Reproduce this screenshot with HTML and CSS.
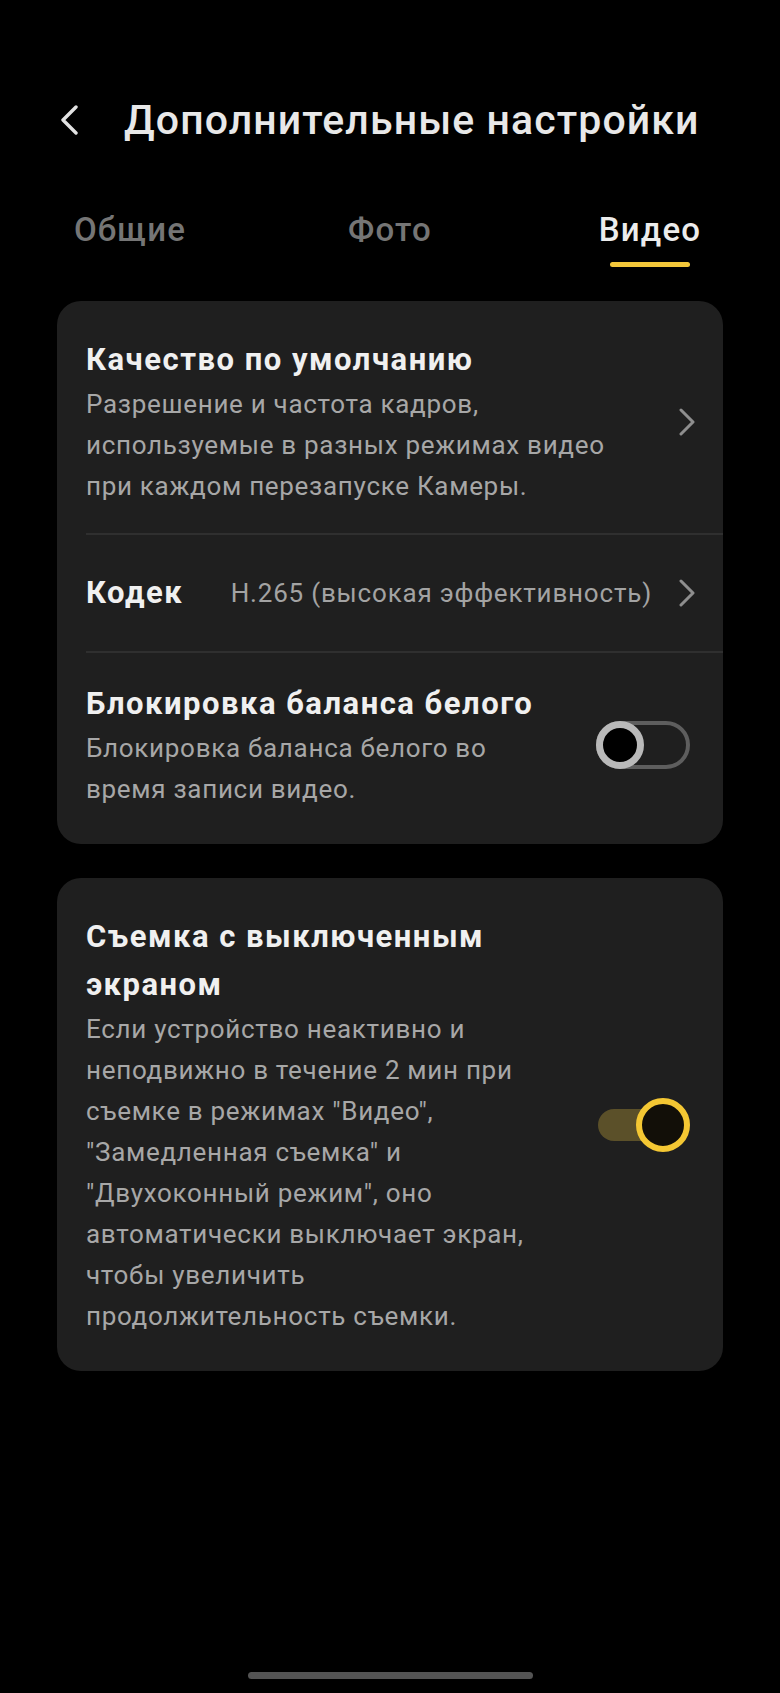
FILE: index.html
```html
<!DOCTYPE html>
<html lang="ru">
<head>
    <meta charset="UTF-8">
    <meta name="viewport" content="width=device-width, initial-scale=1.0">
    <title>Дополнительные настройки</title>
    <link rel="stylesheet" href="styles.css">
</head>
<body>
    <div class="header">
        <svg class="back" width="18" height="30" viewBox="0 0 18 30">
            <polyline points="16,2 3,15 16,28" fill="none" stroke="#e2e2e2" stroke-width="3.4" stroke-linecap="round" stroke-linejoin="round"/>
        </svg>
        <h1 class="title">Дополнительные настройки</h1>
    </div>

    <div class="tabs">
        <div class="tab">Общие</div>
        <div class="tab">Фото</div>
        <div class="tab active">Видео<span class="underline"></span></div>
    </div>

    <div class="card">
        <div class="item">
            <div class="text wide">
                <div class="item-title">Качество по умолчанию</div>
                <div class="item-sub">Разрешение и частота кадров, используемые в разных режимах видео при каждом перезапуске Камеры.</div>
            </div>
            <svg class="chevron" width="16" height="28" viewBox="0 0 16 28">
                <polyline points="2,2 14,14 2,26" fill="none" stroke="#8e8e8e" stroke-width="3" stroke-linecap="round" stroke-linejoin="round"/>
            </svg>
        </div>
        <div class="divider"></div>
        <div class="item codec">
            <div class="item-title">Кодек</div>
            <div class="value">H.265 (высокая эффективность)</div>
            <svg class="chevron" width="16" height="28" viewBox="0 0 16 28">
                <polyline points="2,2 14,14 2,26" fill="none" stroke="#8e8e8e" stroke-width="3" stroke-linecap="round" stroke-linejoin="round"/>
            </svg>
        </div>
        <div class="divider"></div>
        <div class="item">
            <div class="text narrow">
                <div class="item-title">Блокировка баланса белого</div>
                <div class="item-sub">Блокировка баланса белого во время записи видео.</div>
            </div>
            <div class="switch off"><span class="thumb"></span></div>
        </div>
    </div>

    <div class="card second">
        <div class="item">
            <div class="text narrow">
                <div class="item-title">Съемка с выключенным экраном</div>
                <div class="item-sub">Если устройство неактивно и неподвижно в течение 2 мин при съемке в режимах "Видео", "Замедленная съемка" и "Двухоконный режим", оно автоматически выключает экран, чтобы увеличить продолжительность съемки.</div>
            </div>
            <div class="switch on"><span class="track"></span><span class="thumb"></span></div>
        </div>
    </div>

    <div class="home-bar"></div>
</body>
</html>
```

FILE: styles.css
```css
body {
    font-family: Roboto, "Noto Sans", sans-serif;
    margin: 0;
    padding: 0;
    min-height: 1693px;
    display: flex;
    flex-direction: column;
    background-color: #000;
    color: #eeeeee;
}

.header {
    display: flex;
    align-items: center;
    padding-top: 98px;
}

.back {
    margin-left: 60px;
    margin-right: 46px;
}

.title {
    margin: 0;
    font-size: 41px;
    font-weight: 500;
    letter-spacing: 1.1px;
    line-height: 44px;
    color: #e8e8e8;
}

.tabs {
    display: grid;
    grid-template-columns: repeat(3, 1fr);
    margin-top: 68px;
}

.tab {
    display: flex;
    flex-direction: column;
    align-items: center;
    font-size: 33px;
    font-weight: 500;
    letter-spacing: 1.2px;
    line-height: 40px;
    color: #757575;
}

.tab.active {
    color: #ececec;
}

.underline {
    width: 80px;
    height: 5px;
    margin-top: 12px;
    border-radius: 3px;
    background: #f3c73a;
}

.card {
    margin: 34px 57px 0 57px;
    padding: 8px 0;
    background: #1f1f1f;
    border-radius: 24px;
}

.item {
    display: flex;
    align-items: center;
    padding: 27px 28px 26px 29px;
}

.text.wide {
    width: 533px;
}

.text.narrow {
    width: 470px;
}

.item-title {
    font-size: 31px;
    font-weight: 700;
    letter-spacing: 1.5px;
    line-height: 48px;
    color: #f0f0f0;
}

.item-sub {
    font-size: 26px;
    letter-spacing: 0.7px;
    line-height: 41px;
    color: #a7a7a7;
}

.chevron {
    margin-left: auto;
}

.codec {
    padding-top: 34px;
    padding-bottom: 34px;
}

.value {
    margin-left: auto;
    margin-right: 27px;
    font-size: 26px;
    letter-spacing: 0.8px;
    color: #a3a3a3;
}

.codec .chevron {
    margin-left: 0;
}

.divider {
    height: 2px;
    margin-left: 29px;
    background: #2f2f2f;
}

.switch {
    position: relative;
    margin-left: auto;
    box-sizing: border-box;
}

.switch.off {
    width: 94px;
    height: 48px;
    margin-right: 5px;
    border: 4px solid #5e5e5e;
    border-radius: 24px;
}

.switch.off .thumb {
    position: absolute;
    left: -4px;
    top: -4px;
    width: 48px;
    height: 48px;
    box-sizing: border-box;
    border: 7px solid #b9b9b9;
    border-radius: 50%;
    background: #000;
}

.switch.on {
    width: 92px;
    height: 55px;
    margin-right: 5px;
}

.switch.on .track {
    position: absolute;
    left: 0;
    top: 11px;
    width: 70px;
    height: 32px;
    border-radius: 16px;
    background: #5b5029;
}

.switch.on .thumb {
    position: absolute;
    right: 0;
    top: 0;
    width: 54px;
    height: 54px;
    box-sizing: border-box;
    border: 6px solid #f4c733;
    border-radius: 50%;
    background: #120f08;
}

.home-bar {
    width: 285px;
    height: 7px;
    margin: auto auto 14px auto;
    border-radius: 4px;
    background: #545454;
}
```
